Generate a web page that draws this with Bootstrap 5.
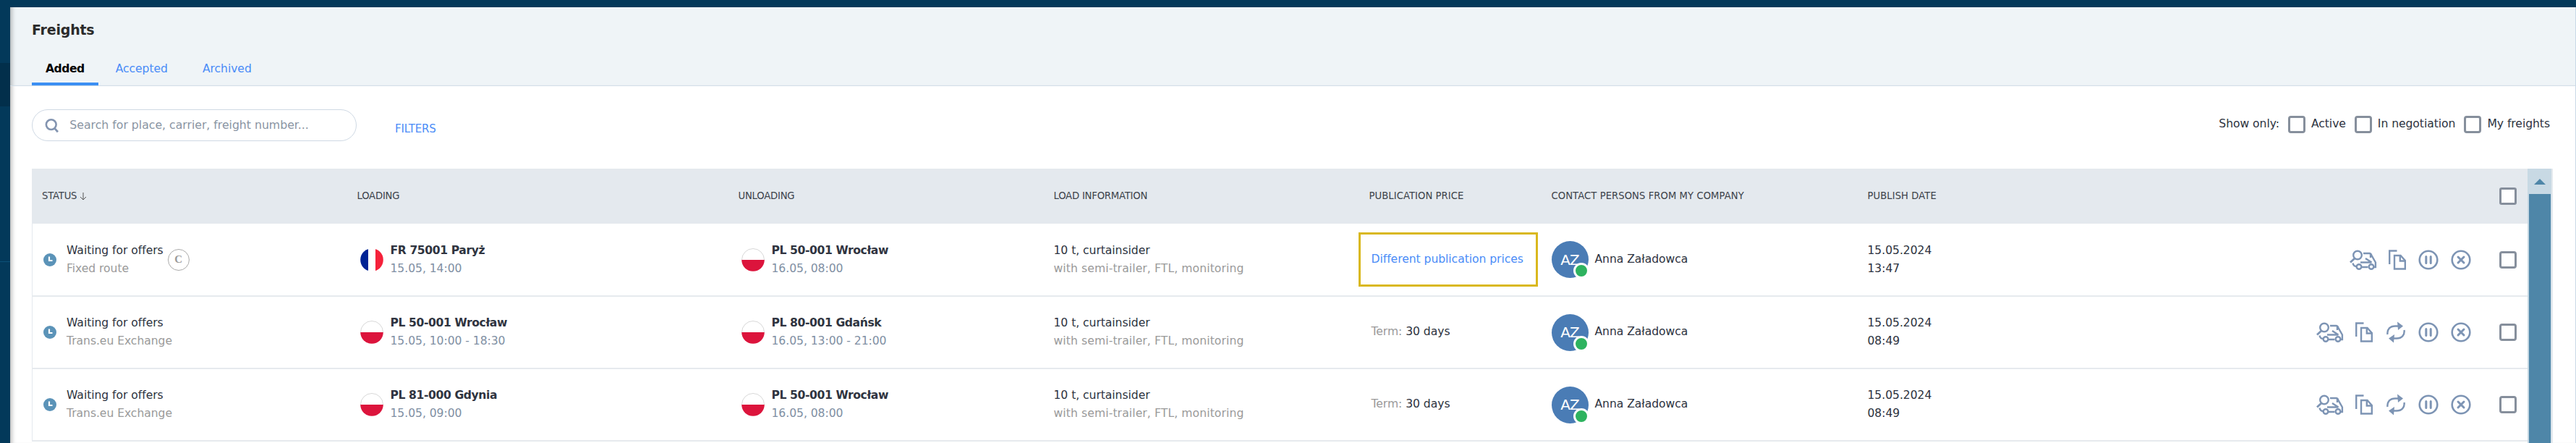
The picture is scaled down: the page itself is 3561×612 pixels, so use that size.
<!DOCTYPE html>
<html lang="en"><head><meta charset="utf-8"><title>Freights</title>
<link href="https://cdn.jsdelivr.net/npm/bootstrap@5.3.0/dist/css/bootstrap.min.css" rel="stylesheet">
<style>
html,body{height:612px;overflow:hidden}
body{background:#03395a;font-family:"DejaVu Sans","Liberation Sans",sans-serif;font-size:15.6px;letter-spacing:-.05px;color:#2d3340}
.shell{padding-top:10px;height:612px}
.side{width:14px;flex:none;margin-top:-10px}
.side-a{height:87px}.side-b{height:60px;background:#022f4b}.side-c{height:215px;border-bottom:1px solid #0c5177}
.panel{flex:1;min-width:0;background:#fff;border-right:1px solid #c9d9e6;box-shadow:inset 7px 0 6px -5px rgba(0,0,0,.3)}
.head-area{background:#eff4f7;border-bottom:1px solid #d2dee8;height:109px;padding:16px 0 0 30px;box-shadow:inset 7px 0 6px -5px rgba(0,0,0,.3)}
.page-title{font-size:19px;font-weight:700;line-height:30px;margin:0;color:#2b2b2b;letter-spacing:-.2px}
.tabs-row{margin-top:16px;gap:5px}
.tabs-row .nav-link{padding:11px 19px 7px;line-height:24px;border-bottom:4px solid transparent;color:#4a8cf7;height:46px}
.tabs-row .nav-link.active{color:#000;font-weight:700;border-bottom-color:#3b8ff3;letter-spacing:-.5px}
.tabs-row .nav-item+.nav-item+.nav-item{margin-left:5px}
.toolbar{padding:32px 35px 38px 30px;height:114px}
.search-box{width:449px;height:44px;border:1px solid #cfd9e4;border-radius:22px;padding-left:17px;gap:15px}
.search-box input{border:0;padding:0;box-shadow:none;font-size:15.8px;color:#333;background:transparent;letter-spacing:-.05px}
.search-box input:focus{box-shadow:none}
.search-box input::placeholder{color:#8a95a3}
.filter-btn{margin:17px 0 0 53px;padding:0;font-size:15px;color:#4a8cf7;text-decoration:none;border:0;letter-spacing:-.2px;line-height:20px}
.show-only{gap:8px;margin-top:-1px}
.show-only label{margin:0}
.tick{width:24px;height:24px;margin:0!important;border:3px solid #868f9c;border-radius:4px;flex:none;float:none!important}
.table-wrap{padding:0 31px 0 30px}
.frt{table-layout:fixed;width:3451px;border-left:1px solid #e4e9ee;font-size:15.6px}
.frt th{background:#e4e9ee;height:76px;padding:0 0 0 13px;font-weight:400;font-size:13.2px;color:#3d434b;border:0;vertical-align:middle;letter-spacing:-.2px}
.frt th.wide-h{letter-spacing:.05px}
.frt td{height:100px;padding:0 0 0 13px;border-bottom:2px solid #e6eaee;vertical-align:middle;color:#2d3340}
.frt th.price-h{padding-left:15px}
.frt td.price-c{padding:0}
.status-c{gap:14px;padding-left:2px}
.place-c{gap:10px;padding-left:4px}
.two-l{line-height:25px}
.two-l div{white-space:nowrap}
.sub-g{color:#9a9a9a}
.sub-w{letter-spacing:.1px}
.sub-b{color:#7f8fa3}
.name-b{font-weight:700;letter-spacing:-.4px;color:#2f3440}
.c-mark{width:30px;height:30px;border:1px solid #aaa;border-radius:50%;font-family:"Liberation Serif",serif;font-weight:700;font-size:15px;color:#999;margin-left:-8px;flex:none}
.price-box{width:248px;height:75px;border:3px solid #d9b81e;padding-left:15px;color:#4a8cf7;white-space:nowrap}
.term-l{padding-left:18px}
.person{gap:9px}
.avatar{width:51px;height:51px;background:#4a7cb5;color:#fff;font-size:20px;flex:none;letter-spacing:-1px}
.dot{position:absolute;right:-1px;bottom:-1px;width:22px;height:22px;background:#2eb35f;border:3px solid #fff}
.acts{padding-right:13px;gap:0}
.ic{color:#7d94b4;flex:none}
.check-c{padding-right:15px!important;text-align:right}
.bar{width:35px;flex:none;height:379px;background:#c8d9e4;border-right:2px solid #e4e9ee;padding:0 1px 0 2px}
.bar-top{height:35px}
.bar-thumb{height:344px;background:#4e86a8}
.bar-arrow{width:0;height:0;border:8px solid transparent;border-top:0;border-bottom:8px solid #4e86a8;margin:0 auto}
</style></head>
<body>
<svg width="0" height="0" class="position-absolute">
<symbol id="i-truck" viewBox="0 0 38 28"><g fill="none" stroke="currentColor" stroke-width="2.4"><circle cx="11" cy="7.5" r="5.8"/><path d="M7 12 1 17.5" stroke-width="2.8"/><path d="M4.5 18.5c.6 2.5 2 4.5 4.5 4.5M19 5h8.5c1.5 0 2.3 1 3 3l5.4 9.5V24h-3.5M25.5 24H17M15 17.5h15.5M22 12l8.5 5.5"/><path d="M29 5v6"/><circle cx="13" cy="23.5" r="3.3"/><circle cx="30" cy="23.5" r="3.3"/></g></symbol>
<symbol id="i-doc" viewBox="0 0 24 28"><g fill="none" stroke="currentColor" stroke-width="2.4"><path d="M1.2 20V1.5H11.5"/><path d="M8 8h8.5l6.3 7v11.5H8z"/><path d="M15.800 8v7.500h7"/></g></symbol>
<symbol id="i-sync" viewBox="0 0 26 30"><g fill="none" stroke="currentColor" stroke-width="2.400"><path d="M1.500 18C.5 11 5 6.500 12 6.500h4"/><path d="M24.500 12c1 7-3.500 11.500-10.500 11.500h-4"/></g><path fill="currentColor" d="M15 .5 23 6.500 16 12zM11 18 3 23.500 10 29.500z"/></symbol>
<symbol id="i-pause" viewBox="0 0 28 28"><circle cx="14" cy="14" r="12.300" fill="none" stroke="currentColor" stroke-width="2.600"/><path d="M10.800 9.500v9M17.200 9.500v9" fill="none" stroke="currentColor" stroke-width="3" stroke-linecap="round"/></symbol>
<symbol id="i-x" viewBox="0 0 28 28"><circle cx="14" cy="14" r="12.300" fill="none" stroke="currentColor" stroke-width="2.600"/><path d="M10 10l8 8M18 10l-8 8" fill="none" stroke="currentColor" stroke-width="3" stroke-linecap="round"/></symbol>
<symbol id="i-clock" viewBox="0 0 18 18"><circle cx="9" cy="9" r="9" fill="#5b93b8"/><path d="M8 4.500v5.500h4.500" fill="none" stroke="#fff" stroke-width="2.200"/></symbol>
<symbol id="i-pl" viewBox="0 0 32 32"><clipPath id="cp"><circle cx="16" cy="16" r="15.800"/></clipPath><g clip-path="url(#cp)"><rect width="32" height="16" fill="#fff"/><rect y="16" width="32" height="16" fill="#dc143c"/></g><path d="M.5 16a15.500 15.500 0 0 1 31 0" fill="none" stroke="#d8d8d8"/></symbol>
<symbol id="i-fr" viewBox="0 0 32 32"><clipPath id="cq"><circle cx="16" cy="16" r="15.800"/></clipPath><g clip-path="url(#cq)"><rect width="11" height="32" fill="#002395"/><rect x="11" width="10" height="32" fill="#fff"/><rect x="21" width="11" height="32" fill="#f5213a"/></g></symbol>
</svg>
<div class="shell d-flex">
 <div class="side"><div class="side-a"></div><div class="side-b"></div><div class="side-c"></div></div>
 <div class="panel">
  <div class="head-area">
   <h1 class="page-title">Freights</h1>
   <ul class="nav tabs-row">
    <li class="nav-item"><a class="nav-link active" href="#">Added</a></li>
    <li class="nav-item"><a class="nav-link" href="#">Accepted</a></li>
    <li class="nav-item"><a class="nav-link" href="#">Archived</a></li>
   </ul>
  </div>
  <div class="toolbar d-flex align-items-start">
   <div class="search-box d-flex align-items-center">
    <svg width="21" height="21" viewBox="0 0 21 21" class="flex-none"><circle cx="9.500" cy="9" r="7.500" fill="none" stroke="#8394b0" stroke-width="2.800"/><path d="M14.500 14.500 19.500 20" stroke="#8394b0" stroke-width="3"/></svg>
    <input class="form-control" type="text" placeholder="Search for place, carrier, freight number...">
   </div>
   <button class="btn btn-link filter-btn" type="button">FILTERS</button>
   <div class="show-only d-flex align-items-center ms-auto" style="height:44px">
    <span class="me-1">Show only:</span>
    <input class="form-check-input tick" type="checkbox" id="c1"><label for="c1" class="me-1">Active</label>
    <input class="form-check-input tick" type="checkbox" id="c2"><label for="c2" class="me-1">In negotiation</label>
    <input class="form-check-input tick" type="checkbox" id="c3"><label for="c3">My freights</label>
   </div>
  </div>
  <div class="table-wrap d-flex align-items-start">
   <table class="table frt mb-0">
    <colgroup><col style="width:436px"><col style="width:527px"><col style="width:436px"><col style="width:434px"><col style="width:254px"><col style="width:437px"><col style="width:300px"><col><col style="width:65px"></colgroup>
    <thead><tr>
     <th>STATUS <svg width="10" height="12" viewBox="0 0 10 12"><path d="M5 1v10M1 7l4 4 4-4" fill="none" stroke="#555" stroke-width="1"/></svg></th><th>LOADING</th><th>UNLOADING</th><th>LOAD INFORMATION</th><th class="price-h wide-h">PUBLICATION PRICE</th><th class="wide-h">CONTACT PERSONS FROM MY COMPANY</th><th class="wide-h">PUBLISH DATE</th><th></th>
     <th class="check-c"><input class="form-check-input tick align-middle" type="checkbox" aria-label="Select all"></th>
    </tr></thead>
    <tbody>
     <tr>
      <td><div class="d-flex align-items-center status-c"><svg width="18" height="18" class="flex-none"><use href="#i-clock"/></svg><div class="two-l"><div>Waiting for offers</div><div class="sub-g">Fixed route</div></div><div class="c-mark d-flex align-items-center justify-content-center">C</div></div></td>
      <td><div class="d-flex align-items-center place-c"><svg width="32" height="32" class="flex-none"><use href="#i-fr"/></svg><div class="two-l"><div class="name-b">FR 75001 Paryż</div><div class="sub-b">15.05, 14:00</div></div></div></td>
      <td><div class="d-flex align-items-center place-c"><svg width="32" height="32" class="flex-none"><use href="#i-pl"/></svg><div class="two-l"><div class="name-b">PL 50-001 Wrocław</div><div class="sub-b">16.05, 08:00</div></div></div></td>
      <td><div class="two-l"><div>10 t, curtainsider</div><div class="sub-g sub-w">with semi-trailer, FTL, monitoring</div></div></td>
      <td class="price-c"><div class="price-box d-flex align-items-center">Different publication prices</div></td>
      <td><div class="d-flex align-items-center person"><div class="avatar rounded-circle position-relative d-flex align-items-center justify-content-center">AZ<span class="dot rounded-circle"></span></div><span>Anna Załadowca</span></div></td>
      <td><div class="two-l"><div>15.05.2024</div><div>13:47</div></div></td>
      <td><div class="d-flex align-items-center justify-content-end acts"><svg width="38" height="28" class="ic"><use href="#i-truck"/></svg><svg width="24" height="28" class="ic ms-3"><use href="#i-doc"/></svg><svg width="28" height="28" class="ic" style="margin-left:17px"><use href="#i-pause"/></svg><svg width="28" height="28" class="ic" style="margin-left:17px"><use href="#i-x"/></svg></div></td>
      <td class="check-c"><input class="form-check-input tick align-middle" type="checkbox" aria-label="Select"></td>
     </tr>
     <tr>
      <td><div class="d-flex align-items-center status-c"><svg width="18" height="18" class="flex-none"><use href="#i-clock"/></svg><div class="two-l"><div>Waiting for offers</div><div class="sub-g">Trans.eu Exchange</div></div></div></td>
      <td><div class="d-flex align-items-center place-c"><svg width="32" height="32" class="flex-none"><use href="#i-pl"/></svg><div class="two-l"><div class="name-b">PL 50-001 Wrocław</div><div class="sub-b">15.05, 10:00 - 18:30</div></div></div></td>
      <td><div class="d-flex align-items-center place-c"><svg width="32" height="32" class="flex-none"><use href="#i-pl"/></svg><div class="two-l"><div class="name-b">PL 80-001 Gdańsk</div><div class="sub-b">16.05, 13:00 - 21:00</div></div></div></td>
      <td><div class="two-l"><div>10 t, curtainsider</div><div class="sub-g sub-w">with semi-trailer, FTL, monitoring</div></div></td>
      <td class="price-c"><div class="term-l"><span class="sub-g">Term:</span> 30 days</div></td>
      <td><div class="d-flex align-items-center person"><div class="avatar rounded-circle position-relative d-flex align-items-center justify-content-center">AZ<span class="dot rounded-circle"></span></div><span>Anna Załadowca</span></div></td>
      <td><div class="two-l"><div>15.05.2024</div><div>08:49</div></div></td>
      <td><div class="d-flex align-items-center justify-content-end acts"><svg width="38" height="28" class="ic"><use href="#i-truck"/></svg><svg width="24" height="28" class="ic ms-3"><use href="#i-doc"/></svg><svg width="26" height="30" class="ic" style="margin-left:19px"><use href="#i-sync"/></svg><svg width="28" height="28" class="ic" style="margin-left:18px"><use href="#i-pause"/></svg><svg width="28" height="28" class="ic" style="margin-left:17px"><use href="#i-x"/></svg></div></td>
      <td class="check-c"><input class="form-check-input tick align-middle" type="checkbox" aria-label="Select"></td>
     </tr>
     <tr>
      <td><div class="d-flex align-items-center status-c"><svg width="18" height="18" class="flex-none"><use href="#i-clock"/></svg><div class="two-l"><div>Waiting for offers</div><div class="sub-g">Trans.eu Exchange</div></div></div></td>
      <td><div class="d-flex align-items-center place-c"><svg width="32" height="32" class="flex-none"><use href="#i-pl"/></svg><div class="two-l"><div class="name-b">PL 81-000 Gdynia</div><div class="sub-b">15.05, 09:00</div></div></div></td>
      <td><div class="d-flex align-items-center place-c"><svg width="32" height="32" class="flex-none"><use href="#i-pl"/></svg><div class="two-l"><div class="name-b">PL 50-001 Wrocław</div><div class="sub-b">16.05, 08:00</div></div></div></td>
      <td><div class="two-l"><div>10 t, curtainsider</div><div class="sub-g sub-w">with semi-trailer, FTL, monitoring</div></div></td>
      <td class="price-c"><div class="term-l"><span class="sub-g">Term:</span> 30 days</div></td>
      <td><div class="d-flex align-items-center person"><div class="avatar rounded-circle position-relative d-flex align-items-center justify-content-center">AZ<span class="dot rounded-circle"></span></div><span>Anna Załadowca</span></div></td>
      <td><div class="two-l"><div>15.05.2024</div><div>08:49</div></div></td>
      <td><div class="d-flex align-items-center justify-content-end acts"><svg width="38" height="28" class="ic"><use href="#i-truck"/></svg><svg width="24" height="28" class="ic ms-3"><use href="#i-doc"/></svg><svg width="26" height="30" class="ic" style="margin-left:19px"><use href="#i-sync"/></svg><svg width="28" height="28" class="ic" style="margin-left:18px"><use href="#i-pause"/></svg><svg width="28" height="28" class="ic" style="margin-left:17px"><use href="#i-x"/></svg></div></td>
      <td class="check-c"><input class="form-check-input tick align-middle" type="checkbox" aria-label="Select"></td>
     </tr>
    </tbody>
   </table>
   <div class="bar"><div class="bar-top d-flex align-items-center"><div class="bar-arrow"></div></div><div class="bar-thumb"></div></div>
  </div>
 </div>
</div>
<script src="https://cdn.jsdelivr.net/npm/bootstrap@5.3.0/dist/js/bootstrap.bundle.min.js"></script>
</body></html>
